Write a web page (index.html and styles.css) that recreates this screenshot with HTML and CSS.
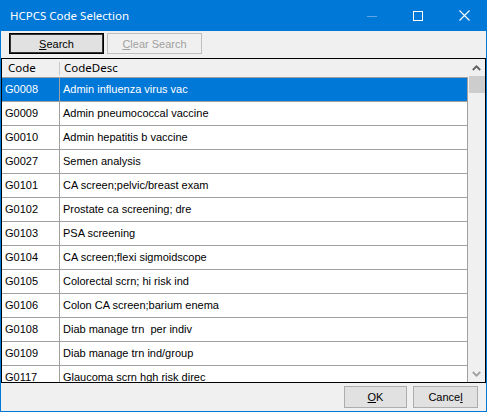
FILE: index.html
```html
<!DOCTYPE html>
<html lang="en">
<head>
    <meta charset="UTF-8">
    <meta name="viewport" content="width=device-width, initial-scale=1.0">
    <title>HCPCS Code Selection</title>
    <link rel="stylesheet" href="styles.css">
</head>
<body>
    <div class="window">
        <div class="titlebar">
            <span class="title">HCPCS Code Selection</span>
            <div class="caption-buttons">
                <span class="cap-btn">
                    <svg width="10" height="10" viewBox="0 0 10 10"><line x1="0" y1="5.5" x2="10" y2="5.5" stroke="#5ea6e6" stroke-width="1"/></svg>
                </span>
                <span class="cap-btn">
                    <svg width="10" height="10" viewBox="0 0 10 10"><rect x="0.5" y="0.5" width="9" height="9" fill="none" stroke="#fff" stroke-width="1"/></svg>
                </span>
                <span class="cap-btn">
                    <svg width="11" height="11" viewBox="0 0 11 11"><path d="M0.5 0.5 L10.5 10.5 M10.5 0.5 L0.5 10.5" stroke="#fff" stroke-width="1.1"/></svg>
                </span>
            </div>
        </div>

        <div class="toolbar">
            <button class="btn btn-default"><u>S</u>earch</button>
            <button class="btn" disabled><u>C</u>lear Search</button>
        </div>

        <div class="grid">
            <div class="grid-main">
                <div class="grid-header">
                    <div class="hcell code">Code</div>
                    <div class="hcell desc">CodeDesc</div>
                </div>
                <div class="grid-body" id="rows"></div>
            </div>
            <div class="scrollbar">
                <div class="sb-arrow">
                    <svg width="9" height="6" viewBox="0 0 9 6"><path d="M0.8 5 L4.5 1.3 L8.2 5" fill="none" stroke="#606060" stroke-width="1.8"/></svg>
                </div>
                <div class="sb-track"><div class="sb-thumb"></div></div>
                <div class="sb-arrow">
                    <svg width="9" height="6" viewBox="0 0 9 6"><path d="M0.8 1 L4.5 4.7 L8.2 1" fill="none" stroke="#a0a0a0" stroke-width="1.8"/></svg>
                </div>
            </div>
        </div>

        <div class="footer">
            <button class="btn btn-ok"><u>O</u>K</button>
            <button class="btn btn-cancel">Cance<u>l</u></button>
        </div>
    </div>

    <script>
        // hcpcs codes shown in the grid
        var codes = [
            ['G0008', 'Admin influenza virus vac'],
            ['G0009', 'Admin pneumococcal vaccine'],
            ['G0010', 'Admin hepatitis b vaccine'],
            ['G0027', 'Semen analysis'],
            ['G0101', 'CA screen;pelvic/breast exam'],
            ['G0102', 'Prostate ca screening; dre'],
            ['G0103', 'PSA screening'],
            ['G0104', 'CA screen;flexi sigmoidscope'],
            ['G0105', 'Colorectal scrn; hi risk ind'],
            ['G0106', 'Colon CA screen;barium enema'],
            ['G0108', 'Diab manage trn  per indiv'],
            ['G0109', 'Diab manage trn ind/group'],
            ['G0117', 'Glaucoma scrn hgh risk direc']
        ];

        var rows = document.getElementById('rows');
        for (var i = 0; i < codes.length; i++) {
            var row = document.createElement('div');
            row.className = i === 0 ? 'row selected' : 'row';
            var c1 = document.createElement('div');
            c1.className = 'cell code';
            c1.textContent = codes[i][0];
            var c2 = document.createElement('div');
            c2.className = 'cell desc';
            c2.textContent = codes[i][1];
            row.appendChild(c1);
            row.appendChild(c2);
            rows.appendChild(row);
        }
    </script>
</body>
</html>
```

FILE: styles.css
```css
body {
    margin: 0;
    background: #f0f0f0;
}
.window {
    width: 485px;
    height: 411px;
    border: 1px solid #0078d7;
    border-top: none;
    display: flex;
    flex-direction: column;
    background: #f0f0f0;
    font-family: "Liberation Sans", Arial, sans-serif;
    font-size: 11px;
}
.titlebar {
    height: 31px;
    background: #0078d7;
    color: #fff;
    display: flex;
    align-items: center;
    margin: 0 -1px;
    padding-left: 10px;
}
.title {
    font-family: "Noto Sans", sans-serif;
    font-size: 11.5px;
    flex: 1;
    padding-bottom: 1px;
}
.caption-buttons {
    display: flex;
}
.cap-btn {
    width: 46px;
    height: 31px;
    display: flex;
    align-items: center;
    justify-content: center;
}
.toolbar {
    height: 27px;
    display: flex;
    gap: 3px;
    padding: 2px 0 0 8px;
    box-sizing: border-box;
}
.btn {
    height: 21px;
    width: 95px;
    padding: 0;
    background: #e1e1e1;
    border: 1px solid #adadad;
    font-family: "Liberation Sans", Arial, sans-serif;
    font-size: 11px;
    color: #000;
}
.btn-default {
    border: 1px solid #000;
    box-shadow: inset 0 0 0 1px #333;
}
.btn:disabled {
    color: #a0a0a0;
    background: #f0f0f0;
    border-color: #bfbfbf;
}
.grid {
    flex: 1;
    border: 1px solid #000;
    display: flex;
    min-height: 0;
    overflow: hidden;
    background: #fff;
}
.grid-main {
    width: 466px;
    display: flex;
    flex-direction: column;
    overflow: hidden;
}
.grid-header {
    height: 18px;
    display: flex;
    background: #f0f0f0;
    border-bottom: 1px solid #a0a0a0;
    flex-shrink: 0;
}
.hcell {
    font-family: "Noto Sans", sans-serif;
    font-size: 11.5px;
    line-height: 18px;
    box-sizing: border-box;
}
.hcell.code {
    width: 58px;
    padding-left: 6px;
    position: relative;
}
.hcell.code::after {
    content: "";
    position: absolute;
    right: 0;
    top: 3px;
    bottom: 2px;
    width: 1px;
    background: #c8c8c8;
}
.hcell.desc {
    padding-left: 4px;
}
.grid-body {
    flex: 1;
    overflow: hidden;
}
.row {
    display: flex;
    height: 24px;
}
.cell {
    box-sizing: border-box;
    height: 24px;
    line-height: 23px;
    border-right: 1px solid #a0a0a0;
    border-bottom: 1px solid #a0a0a0;
    white-space: pre;
    overflow: hidden;
}
.cell.code {
    width: 58px;
    padding-left: 3px;
}
.cell.desc {
    width: 408px;
    padding-left: 3px;
}
.row.selected .cell {
    background: #0078d7;
    color: #fff;
}
.scrollbar {
    width: 17px;
    background: #f0f0f0;
    display: flex;
    flex-direction: column;
}
.sb-arrow {
    height: 17px;
    display: flex;
    align-items: center;
    justify-content: center;
}
.sb-track {
    flex: 1;
    padding-left: 1px;
}
.sb-thumb {
    height: 17px;
    background: #cdcdcd;
}
.footer {
    height: 28px;
    display: flex;
    justify-content: flex-end;
    gap: 6px;
    padding: 3px 8px 0 0;
    box-sizing: border-box;
}
.btn-ok {
    width: 63px;
    height: 22px;
}
.btn-cancel {
    width: 65px;
    height: 22px;
}
```
